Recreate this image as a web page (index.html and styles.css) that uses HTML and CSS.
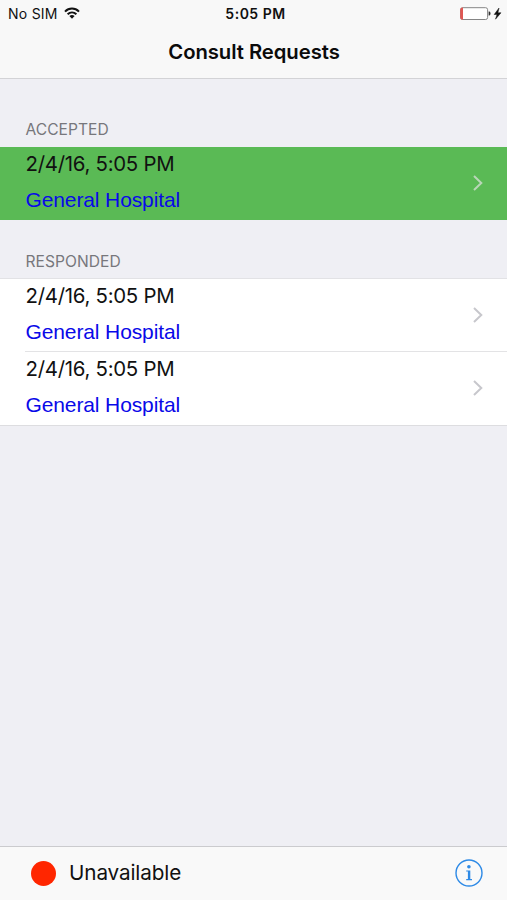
FILE: index.html
```html
<!DOCTYPE html>
<html lang="en">
<head>
<meta charset="utf-8">
<title>Consult Requests</title>
<link rel="stylesheet" href="styles.css">
</head>
<body>
<div class="app">
  <header class="header">
    <div class="status">
      <div class="carrier"><span>No SIM</span>
        <svg class="wifi" width="16" height="13" viewBox="0 0 16 13" fill="none" stroke="#111" stroke-width="2"><path d="M1 4.6C5 .6 11 .6 15 4.6M3.6 7.3C6.2 4.8 9.8 4.8 12.4 7.3"/><path d="M5.4 9.1C7 7.7 9 7.7 10.6 9.1L8 11.8Z" fill="#111" stroke="none"/></svg>
      </div>
      <time class="clock">5:05 PM</time>
      <svg class="battery" width="42" height="14" viewBox="0 0 42 14"><rect x=".6" y=".7" width="27" height="11.8" rx="2" fill="#fff" stroke="#858585"/><path d="M3 .5H2.5Q.2.5.2 2.8V10.4Q.2 12.8 2.5 12.8H3Z" fill="#df5753"/><path d="M28.6 4.6h.7q1.2 0 1.2 2t-1.2 2h-.7z" fill="#333"/><path d="M39 1 34.2 7.5H37L35.5 12.2 41 5.8H37.9Z" fill="#111" stroke="#111" stroke-width=".5"/></svg>
    </div>
    <h1 class="title">Consult Requests</h1>
  </header>
  <main class="content">
    <h2 class="section accepted-title">ACCEPTED</h2>
    <ul class="list accepted">
      <li class="row"><div class="info"><div class="date">2/4/16, 5:05 PM</div><div class="place">General Hospital</div></div><svg class="chevron" width="12" height="18" viewBox="0 0 12 18"><path d="M2 2 9.3 9 2 16"/></svg></li>
    </ul>
    <h2 class="section responded-title">RESPONDED</h2>
    <ul class="list responded">
      <li class="row"><div class="info"><div class="date">2/4/16, 5:05 PM</div><div class="place">General Hospital</div></div><svg class="chevron" width="12" height="18" viewBox="0 0 12 18"><path d="M2 2 9.3 9 2 16"/></svg></li>
      <li class="row"><div class="info"><div class="date">2/4/16, 5:05 PM</div><div class="place">General Hospital</div></div><svg class="chevron" width="12" height="18" viewBox="0 0 12 18"><path d="M2 2 9.3 9 2 16"/></svg></li>
    </ul>
  </main>
  <footer class="footer">
    <span class="dot"></span><span class="availability">Unavailable</span>
    <svg class="about" width="28" height="28" viewBox="0 0 28 28"><circle cx="14" cy="14" r="13" fill="none" stroke="#2e8ae6" stroke-width="1.4"/><circle cx="13.9" cy="7.7" r="1.8" fill="#2e8ae6"/><path d="M11.2 11.4H15.3V20H17V21.2H11.2V20H12.9V12.6H11.2Z" fill="#2e8ae6"/></svg>
  </footer>
</div>
</body>
</html>
```
FILE: styles.css
```css
* { box-sizing: border-box; }
body { margin: 0; font-family: Inter, "Liberation Sans", sans-serif; color: #111; }
h1, h2, ul { margin: 0; padding: 0; list-style: none; }
svg { display: block; flex: none; }
.app { display: flex; flex-direction: column; height: 900px; background: #efeff4; white-space: nowrap; }
.header { height: 79px; background: #f8f8f8; border-bottom: 1px solid #d3d3d6; }
.status { display: grid; grid-template-columns: 1fr auto 1fr; align-items: center; height: 27px; padding: 0 5px 0 8px; }
.carrier { display: flex; align-items: center; gap: 6px; font-size: 14px; letter-spacing: .25px; }
.wifi { margin-bottom: 1px; }
.clock { padding-left: 1px; font-size: 14px; font-weight: 600; letter-spacing: .5px; }
.battery { justify-self: end; }
.title { height: 50px; padding-left: 1px; font-size: 20.3px; line-height: 50px; letter-spacing: -.06px; font-weight: 600; text-align: center; color: #0b0b0b; }
.content { flex: 1; }
.section { padding-left: 25.5px; font-size: 15.6px; line-height: 20px; font-weight: 400; letter-spacing: .03px; color: #77777c; }
.accepted-title { padding-top: 41px; height: 68px; }
.responded-title { padding-top: 32px; height: 58px; }
.row { display: flex; align-items: center; justify-content: space-between; height: 73px; padding: 0 23px 1px 25.5px; }
.accepted .row { background: #5aba55; }
.responded { border-top: 1px solid #e2e2e5; border-bottom: 1px solid #dddde0; background: #fff; }
.responded .row:first-child { height: 72px; padding-bottom: 0; }
.responded .row + .row { height: 74px; padding-top: 1px; background: linear-gradient(#e3e3e5, #e3e3e5) 25px 0 / 100% 1px no-repeat; }
.info { align-self: flex-start; }
.date { height: 35px; font-size: 20.4px; line-height: 34px; letter-spacing: -.27px; }
.place { height: 36px; font-family: "Liberation Sans", sans-serif; font-size: 21px; line-height: 36px; letter-spacing: -.12px; color: #0909e8; }
.chevron { fill: none; stroke: #c7c7cc; stroke-width: 2; }
.accepted .chevron { stroke: #b9d6b8; }
.footer { display: flex; align-items: center; height: 54px; padding: 0 24px 0 31px; background: #f9f9f9; border-top: 1px solid #cbcbce; }
.dot { width: 25px; height: 25px; border-radius: 50%; background: #ff2600; }
.availability { margin-left: 13px; padding-bottom: 2px; font-size: 20.7px; letter-spacing: -.12px; }
.about { margin-left: auto; margin-bottom: 1px; }
```
